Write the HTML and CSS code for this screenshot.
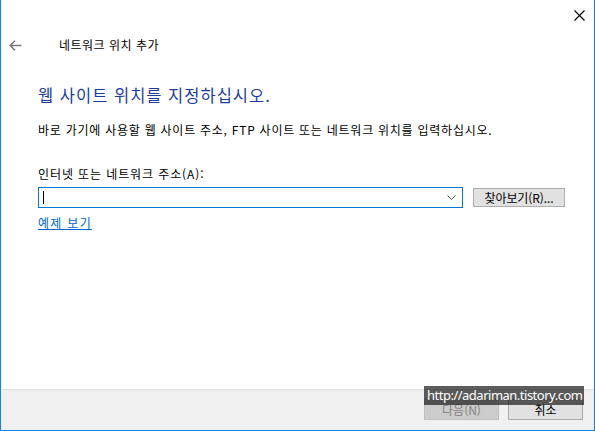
FILE: index.html
```html
<!DOCTYPE html>
<html lang="ko">

<head>
    <meta charset="UTF-8">
    <title>네트워크 위치 추가</title>
    <link rel="stylesheet" href="styles.css">
</head>

<body>
    <div class="window">
        <!-- Barra de titulo -->
        <div class="titlebar">
            <span class="close-btn">
                <svg width="11" height="11" viewBox="0 0 11 11">
                    <path d="M0.5 0.5 L10.5 10.5 M10.5 0.5 L0.5 10.5" stroke="#000" stroke-width="1.1" fill="none" />
                </svg>
            </span>
        </div>

        <!-- Navegacion -->
        <div class="nav">
            <span class="back-btn">
                <svg width="13" height="11" viewBox="0 0 13 11">
                    <path d="M6 0.8 L1.2 5.5 L6 10.2 M1.2 5.5 L12.5 5.5" stroke="#7a7a7a" stroke-width="1.6" fill="none" />
                </svg>
            </span>
            <span class="nav-title">네트워크 위치 추가</span>
        </div>

        <!-- Contenido -->
        <div class="main">
            <h1 class="instruction">웹 사이트 위치를 지정하십시오.</h1>
            <p class="desc">바로 가기에 사용할 웹 사이트 주소, FTP 사이트 또는 네트워크 위치를 입력하십시오.</p>
            <p class="field-label">인터넷 또는 네트워크 주소(A):</p>
            <div class="field-row">
                <div class="combo">
                    <span class="caret"></span>
                    <svg class="chevron" width="9" height="5" viewBox="0 0 9 5">
                        <path d="M0.5 0.5 L4.5 4.5 L8.5 0.5" stroke="#555" stroke-width="1" fill="none" />
                    </svg>
                </div>
                <button class="btn">찾아보기(R)...</button>
            </div>
            <a class="link" href="#">예제 보기</a>
        </div>

        <!-- Botones -->
        <div class="footer">
            <button class="btn btn-wide" disabled>다음(N)</button>
            <button class="btn btn-wide">취소</button>
            <div class="watermark">http://adariman.tistory.com</div>
        </div>
    </div>
</body>

</html>
```
FILE: styles.css
```css
/* Reset */
* {
    margin: 0;
    padding: 0;
    box-sizing: border-box;
}

body {
    background-color: #fff;
    font-family: "Noto Sans CJK KR", "Noto Sans", sans-serif;
    font-size: 12px;
    color: #000;
}

/* Ventana */
.window {
    width: 595px;
    height: 431px;
    border: 1px solid #1883d7;
    border-top: none;
    display: flex;
    flex-direction: column;
    position: relative;
}

.titlebar {
    height: 30px;
    display: flex;
    justify-content: flex-end;
    align-items: center;
    padding-right: 9px;
}

.close-btn {
    display: flex;
    width: 11px;
    height: 11px;
}

.nav {
    height: 30px;
    display: flex;
    align-items: center;
    padding-left: 8px;
}

.back-btn {
    display: flex;
    width: 13px;
    height: 11px;
}

.nav-title {
    margin-left: 37px;
    line-height: 16px;
    letter-spacing: 0.5px;
}

/* Contenido */
.main {
    flex-grow: 1;
    padding: 0 37px;
    display: flex;
    flex-direction: column;
    align-items: flex-start;
}

.instruction {
    margin-top: 25px;
    font-size: 16.5px;
    font-weight: normal;
    line-height: 20px;
    color: #1e3c9b;
    letter-spacing: 1px;
}

.desc {
    margin-top: 17px;
    line-height: 16px;
    letter-spacing: 0.75px;
}

.field-label {
    margin-top: 28px;
    line-height: 16px;
    letter-spacing: 0.9px;
}

.field-row {
    margin-top: 5px;
    display: flex;
    align-items: center;
    gap: 10px;
}

.combo {
    width: 425px;
    height: 21px;
    border: 1px solid #0078d7;
    display: flex;
    align-items: center;
    justify-content: space-between;
    padding: 0 6px 0 4px;
}

.caret {
    width: 1px;
    height: 13px;
    background-color: #000;
}

.chevron {
    display: block;
}

.btn {
    height: 19px;
    padding: 0 8px;
    background-color: #e1e1e1;
    border: 1px solid #adadad;
    font-family: "Noto Sans CJK KR", "Noto Sans", sans-serif;
    font-size: 12px;
    line-height: 16px;
    color: #000;
}

.field-row .btn {
    width: 92px;
    letter-spacing: -0.1px;
}

.link {
    margin-top: 7px;
    line-height: 16px;
    color: #0066cc;
    text-decoration: underline;
    letter-spacing: 1.3px;
}

/* Pie con botones */
.footer {
    height: 41px;
    background-color: #f0f0f0;
    border-top: 1px solid #dfdfdf;
    display: flex;
    justify-content: flex-end;
    align-items: flex-start;
    gap: 9px;
    padding: 9px 11px 0 0;
    position: relative;
}

.btn-wide {
    width: 75px;
    height: 21px;
}

.btn-wide:disabled {
    background-color: #cccccc;
    border-color: #bfbfbf;
    color: #838383;
}

/* Marca de agua encima de los botones */
.watermark {
    position: absolute;
    top: -4px;
    left: 423px;
    width: 160px;
    height: 19px;
    background-color: rgba(30, 30, 30, 0.72);
    color: #fff;
    font-family: "Noto Sans", sans-serif;
    font-size: 13px;
    line-height: 19px;
    padding-left: 3px;
    letter-spacing: -0.5px;
    white-space: nowrap;
}
```
